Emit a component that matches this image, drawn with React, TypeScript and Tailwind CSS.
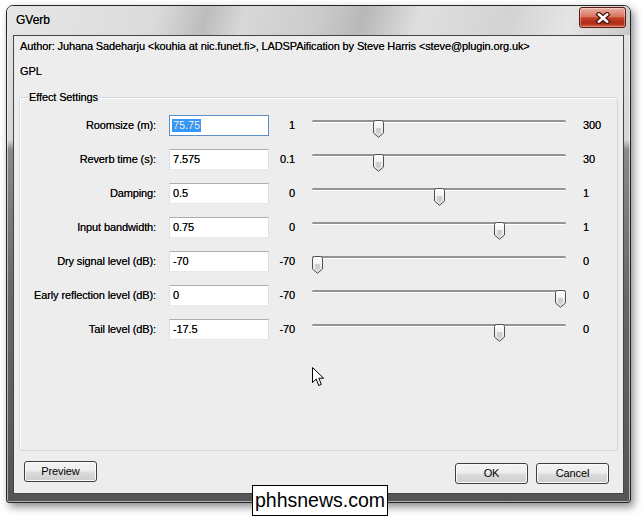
import React from 'react'

type Row = { label: string; value: string; min: string; max: string; pos: number; selected?: boolean }

const rows: Row[] = [
  { label: 'Roomsize (m):', value: '75.75', min: '1', max: '300', pos: 0.25, selected: true },
  { label: 'Reverb time (s):', value: '7.575', min: '0.1', max: '30', pos: 0.25 },
  { label: 'Damping:', value: '0.5', min: '0', max: '1', pos: 0.5 },
  { label: 'Input bandwidth:', value: '0.75', min: '0', max: '1', pos: 0.75 },
  { label: 'Dry signal level (dB):', value: '-70', min: '-70', max: '0', pos: 0 },
  { label: 'Early reflection level (dB):', value: '0', min: '-70', max: '0', pos: 1 },
  { label: 'Tail level (dB):', value: '-17.5', min: '-70', max: '0', pos: 0.75 },
]

function Thumb() {
  return (
    <svg width="11" height="18" viewBox="0 0 11 18">
      <defs>
        <linearGradient id="thumbFill" x1="0" y1="0" x2="0" y2="1">
          <stop offset="0" stopColor="#ffffff" />
          <stop offset="0.5" stopColor="#f0f0f0" />
          <stop offset="1" stopColor="#dcdcdc" />
        </linearGradient>
      </defs>
      <path d="M0.5 2.5 Q0.5 0.5 2.5 0.5 H8.5 Q10.5 0.5 10.5 2.5 V13 L5.5 17.3 L0.5 13 Z" fill="url(#thumbFill)" stroke="#4f4f4f" />
      <path d="M3 8 H8 V12.6 L5.5 14.8 L3 12.6 Z" fill="#cfcfcf" />
    </svg>
  )
}

function Slider({ pos }: { pos: number }) {
  return (
    <div className="relative h-[18px] w-[254px]">
      <div className="mt-[7px] h-[3px] rounded-full border-b border-white bg-[#949494]" />
      <div className="absolute top-0" style={{ left: `${pos * 243}px` }}>
        <Thumb />
      </div>
    </div>
  )
}

function WinButton({ children }: { children: React.ReactNode }) {
  return (
    <button className="flex h-[21px] w-[73px] items-center justify-center rounded-[3px] border border-[#3e3e3e] bg-[linear-gradient(180deg,#f4f4f4_0%,#ececec_48%,#dcdcdc_52%,#cdcdcd_100%)] text-[11px] text-black shadow-[inset_0_0_0_1px_#fbfbfb]">
      {children}
    </button>
  )
}

function CloseGlyph() {
  return (
    <svg width="16" height="12" viewBox="0 0 16 12">
      <path d="M4 2.5 L12 9.5 M12 2.5 L4 9.5" stroke="#4a1208" strokeWidth="5" strokeLinecap="square" />
      <path d="M4 2.5 L12 9.5 M12 2.5 L4 9.5" stroke="#ffffff" strokeWidth="2.6" strokeLinecap="square" />
    </svg>
  )
}

function Cursor() {
  return (
    <svg width="13" height="20" viewBox="0 0 13 20">
      <path d="M0.5 0.5 V15.5 L4.2 12 L6.8 18.5 L9.3 17.4 L6.8 11.2 H11.6 Z" fill="#ffffff" stroke="#000000" strokeLinejoin="round" />
    </svg>
  )
}

export default function App() {
  return (
    <div className="relative h-[518px] w-[644px] overflow-hidden bg-white pl-[6px] pt-[5px] font-['Liberation_Sans',Arial,sans-serif] text-black">
      <div className="flex h-[498px] w-[625px] flex-col rounded-t-[7px] rounded-b-[3px] border border-[#262626] bg-[linear-gradient(180deg,#e4e4e4_0%,#d6d6d6_27%,#8a8a8a_29%,#666666_60%,#555555_100%)] shadow-[inset_0_0_0_1px_rgba(255,255,255,0.55),3px_4px_8px_rgba(0,0,0,0.45)]">
        <div className="flex h-[29px] items-start justify-between rounded-t-[6px] bg-[linear-gradient(105deg,#e6e6e6_0%,#dbdbdb_24%,#bcbcbc_32%,#d8d8d8_38%,#cbcbcb_50%,#b8b8b8_57%,#dfdfdf_66%,#d3d3d3_80%,#e5e5e5_90%,#c8c8c8_100%)] pl-[9px]">
          <span className="text-[12px] leading-[29px] [text-shadow:0_0_0.4px_rgba(0,0,0,0.7)]">GVerb</span>
          <div className="mr-[4px] mt-[1px] flex h-[21px] w-[47px] items-center justify-center rounded-[3px] border border-[#5a1a12] bg-[linear-gradient(180deg,#eab0a2_0%,#d9745f_45%,#c3412a_52%,#b02914_80%,#d35a3d_100%)] shadow-[inset_0_0_0_1px_rgba(255,255,255,0.35)]">
            <CloseGlyph />
          </div>
        </div>
        <div className="mx-[6px] h-[459px] border border-[#454545] bg-[#ededed] text-[11px] tracking-[-0.12px] [text-shadow:0_0_0.4px_rgba(0,0,0,0.7)]">
          <div className="pl-[6px] pt-[2px] leading-[16px]">
            Author: Juhana Sadeharju &lt;kouhia at nic.funet.fi&gt;, LADSPAification by Steve Harris &lt;steve@plugin.org.uk&gt;
          </div>
          <div className="mt-[9px] pl-[6px] leading-[16px]">GPL</div>
          <div className="relative ml-[5px] mt-[18px] h-[354px] w-[599px] rounded-[3px] border border-[#cfd8de] pt-[10px] shadow-[inset_1px_1px_0_#ffffff]">
            <span className="absolute -top-[8px] left-[8px] bg-[#ededed] px-[1px] leading-[14px]">Effect Settings</span>
            {rows.map((r) => (
              <div key={r.label} className="flex h-[34px] items-center">
                <div className="w-[136px] text-right">{r.label}</div>
                <div
                  className={
                    r.selected
                      ? 'ml-[13px] flex h-[21px] w-[100px] items-center border border-[#5b8ec6] bg-white pl-[2px]'
                      : 'ml-[13px] flex h-[21px] w-[100px] items-center border border-[#abadb3] border-b-[#e3e9ef] border-x-[#dbdfe6] bg-white pl-[3px]'
                  }
                >
                  {r.selected ? (
                    <span className="bg-[#3399ff] px-[1px] leading-[13px] text-white">{r.value}</span>
                  ) : (
                    <span>{r.value}</span>
                  )}
                </div>
                <div className="w-[26px] text-right">{r.min}</div>
                <div className="ml-[17px]">
                  <Slider pos={r.pos} />
                </div>
                <div className="ml-[17px]">{r.max}</div>
              </div>
            ))}
          </div>
          <div className="mt-[10px] flex items-start justify-between pl-[10px] pr-[14px]">
            <WinButton>Preview</WinButton>
            <div className="mt-[2px] flex gap-[8px]">
              <WinButton>OK</WinButton>
              <WinButton>Cancel</WinButton>
            </div>
          </div>
        </div>
      </div>
      <div className="absolute left-[312px] top-[367px]">
        <Cursor />
      </div>
      <div className="absolute left-[252px] top-[485px] flex h-[31px] w-[136px] items-center justify-center border border-black bg-white text-[19.5px] leading-none">
        phhsnews.com
      </div>
    </div>
  )
}
